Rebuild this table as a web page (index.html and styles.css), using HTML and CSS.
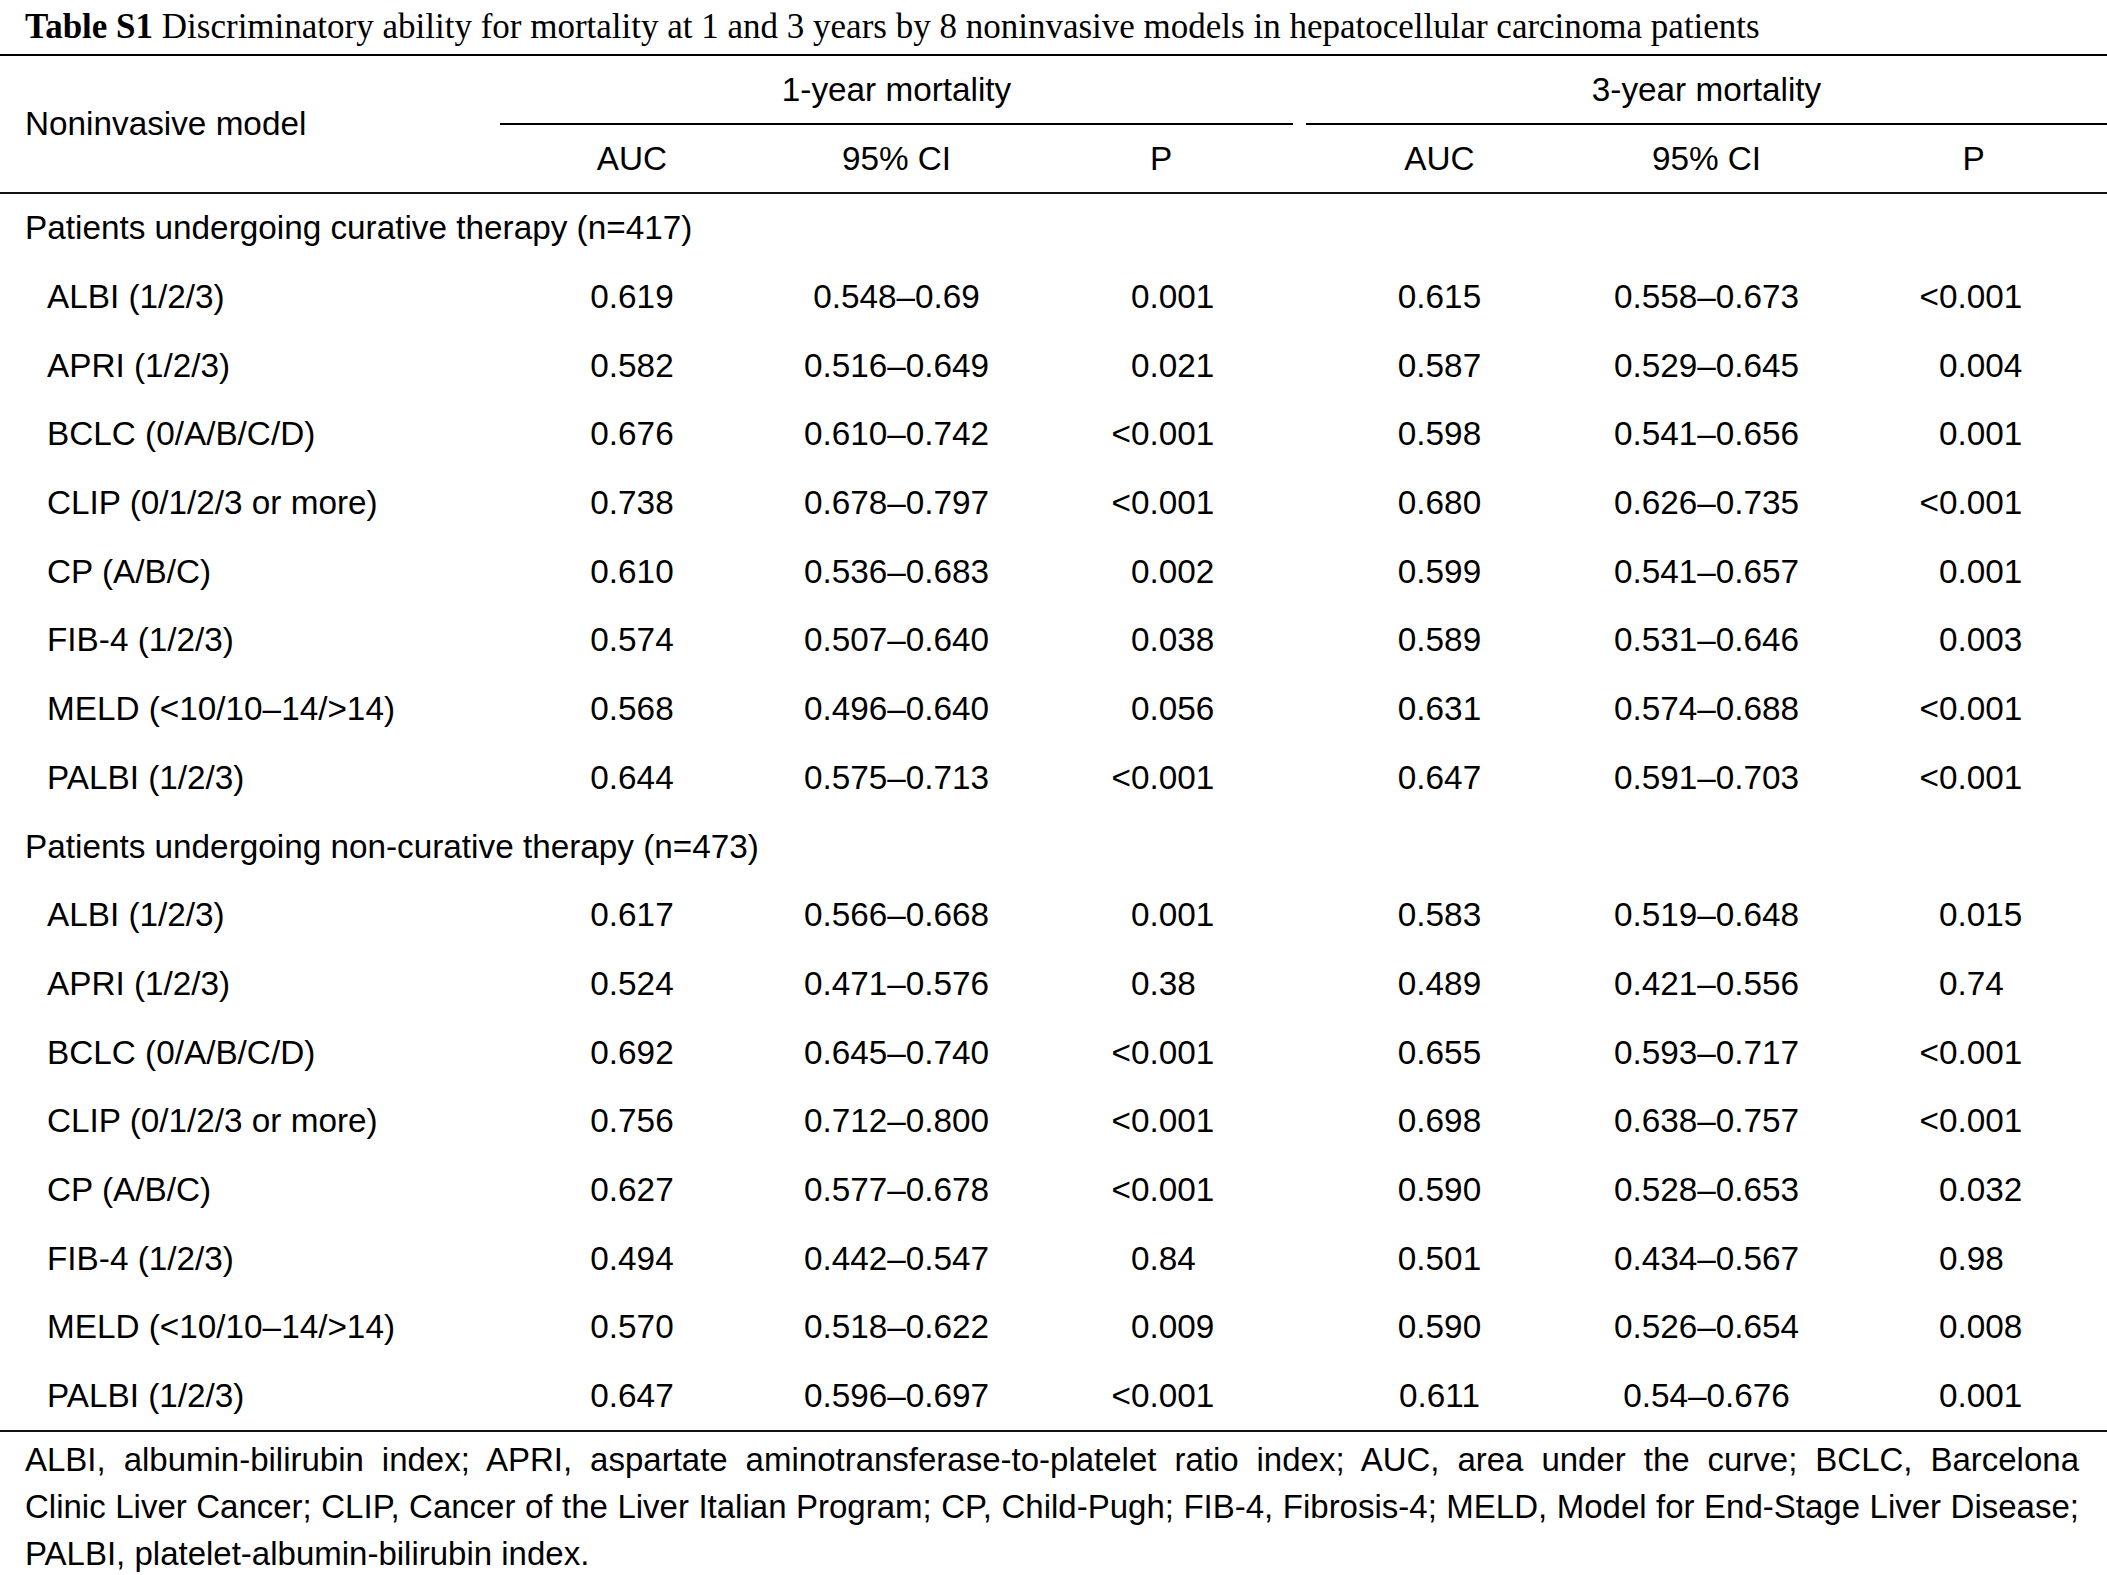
FILE: index.html
```html
<!DOCTYPE html>
<html lang="en">
<head>
<meta charset="utf-8">
<title>Table S1</title>
<link rel="stylesheet" href="styles.css">
</head>
<body>
<div class="page">
  <h1 class="caption"><b>Table S1</b> Discriminatory ability for mortality at 1 and 3 years by 8 noninvasive models in hepatocellular carcinoma patients</h1>

  <div class="grid thead">
    <div class="h-model">Noninvasive model</div>
    <div class="h-span">1-year mortality</div>
    <div class="sp"></div>
    <div class="h-span">3-year mortality</div>
    <div class="h-col">AUC</div>
    <div class="h-col">95% CI</div>
    <div class="h-col">P</div>
    <div class="sp"></div>
    <div class="h-col">AUC</div>
    <div class="h-col">95% CI</div>
    <div class="h-col">P</div>
  </div>

  <div class="grid tbody">
    <div class="group">Patients undergoing curative therapy (n=417)</div>

    <div class="label">ALBI (1/2/3)</div><div class="num">0.619</div><div class="num">0.548–0.69</div><div class="p p1">0.001</div><div class="sp"></div><div class="num">0.615</div><div class="num">0.558–0.673</div><div class="p p3"><span class="lt">&lt;</span>0.001</div>
    <div class="label">APRI (1/2/3)</div><div class="num">0.582</div><div class="num">0.516–0.649</div><div class="p p1">0.021</div><div class="sp"></div><div class="num">0.587</div><div class="num">0.529–0.645</div><div class="p p3">0.004</div>
    <div class="label">BCLC (0/A/B/C/D)</div><div class="num">0.676</div><div class="num">0.610–0.742</div><div class="p p1"><span class="lt">&lt;</span>0.001</div><div class="sp"></div><div class="num">0.598</div><div class="num">0.541–0.656</div><div class="p p3">0.001</div>
    <div class="label">CLIP (0/1/2/3 or more)</div><div class="num">0.738</div><div class="num">0.678–0.797</div><div class="p p1"><span class="lt">&lt;</span>0.001</div><div class="sp"></div><div class="num">0.680</div><div class="num">0.626–0.735</div><div class="p p3"><span class="lt">&lt;</span>0.001</div>
    <div class="label">CP (A/B/C)</div><div class="num">0.610</div><div class="num">0.536–0.683</div><div class="p p1">0.002</div><div class="sp"></div><div class="num">0.599</div><div class="num">0.541–0.657</div><div class="p p3">0.001</div>
    <div class="label">FIB-4 (1/2/3)</div><div class="num">0.574</div><div class="num">0.507–0.640</div><div class="p p1">0.038</div><div class="sp"></div><div class="num">0.589</div><div class="num">0.531–0.646</div><div class="p p3">0.003</div>
    <div class="label">MELD (&lt;10/10–14/&gt;14)</div><div class="num">0.568</div><div class="num">0.496–0.640</div><div class="p p1">0.056</div><div class="sp"></div><div class="num">0.631</div><div class="num">0.574–0.688</div><div class="p p3"><span class="lt">&lt;</span>0.001</div>
    <div class="label">PALBI (1/2/3)</div><div class="num">0.644</div><div class="num">0.575–0.713</div><div class="p p1"><span class="lt">&lt;</span>0.001</div><div class="sp"></div><div class="num">0.647</div><div class="num">0.591–0.703</div><div class="p p3"><span class="lt">&lt;</span>0.001</div>

    <div class="group">Patients undergoing non-curative therapy (n=473)</div>

    <div class="label">ALBI (1/2/3)</div><div class="num">0.617</div><div class="num">0.566–0.668</div><div class="p p1">0.001</div><div class="sp"></div><div class="num">0.583</div><div class="num">0.519–0.648</div><div class="p p3">0.015</div>
    <div class="label">APRI (1/2/3)</div><div class="num">0.524</div><div class="num">0.471–0.576</div><div class="p p1">0.38</div><div class="sp"></div><div class="num">0.489</div><div class="num">0.421–0.556</div><div class="p p3">0.74</div>
    <div class="label">BCLC (0/A/B/C/D)</div><div class="num">0.692</div><div class="num">0.645–0.740</div><div class="p p1"><span class="lt">&lt;</span>0.001</div><div class="sp"></div><div class="num">0.655</div><div class="num">0.593–0.717</div><div class="p p3"><span class="lt">&lt;</span>0.001</div>
    <div class="label">CLIP (0/1/2/3 or more)</div><div class="num">0.756</div><div class="num">0.712–0.800</div><div class="p p1"><span class="lt">&lt;</span>0.001</div><div class="sp"></div><div class="num">0.698</div><div class="num">0.638–0.757</div><div class="p p3"><span class="lt">&lt;</span>0.001</div>
    <div class="label">CP (A/B/C)</div><div class="num">0.627</div><div class="num">0.577–0.678</div><div class="p p1"><span class="lt">&lt;</span>0.001</div><div class="sp"></div><div class="num">0.590</div><div class="num">0.528–0.653</div><div class="p p3">0.032</div>
    <div class="label">FIB-4 (1/2/3)</div><div class="num">0.494</div><div class="num">0.442–0.547</div><div class="p p1">0.84</div><div class="sp"></div><div class="num">0.501</div><div class="num">0.434–0.567</div><div class="p p3">0.98</div>
    <div class="label">MELD (&lt;10/10–14/&gt;14)</div><div class="num">0.570</div><div class="num">0.518–0.622</div><div class="p p1">0.009</div><div class="sp"></div><div class="num">0.590</div><div class="num">0.526–0.654</div><div class="p p3">0.008</div>
    <div class="label">PALBI (1/2/3)</div><div class="num">0.647</div><div class="num">0.596–0.697</div><div class="p p1"><span class="lt">&lt;</span>0.001</div><div class="sp"></div><div class="num">0.611</div><div class="num">0.54–0.676</div><div class="p p3">0.001</div>
  </div>

  <div class="notes">
    <div class="j">ALBI, albumin-bilirubin index; APRI, aspartate aminotransferase-to-platelet ratio index; AUC, area under the curve; BCLC, Barcelona</div>
    <div class="j">Clinic Liver Cancer; CLIP, Cancer of the Liver Italian Program; CP, Child-Pugh; FIB-4, Fibrosis-4; MELD, Model for End-Stage Liver Disease;</div>
    <div>PALBI, platelet-albumin-bilirubin index.</div>
  </div>
</div>
</body>
</html>
```

FILE: styles.css
```css
* {
  box-sizing: border-box;
  margin: 0;
  padding: 0;
}

html,
body {
  background: #fff;
}

body {
  margin: 0;
  font-family: "Liberation Sans", Arial, Helvetica, sans-serif;
  font-size: 33.3px;
  color: #000;
}

.page {
  width: 2107px;
}

.caption {
  font-family: "Liberation Serif", "Times New Roman", serif;
  font-weight: normal;
  font-size: 35px;
  height: 54px;
  line-height: 54px;
  padding-left: 25px;
  white-space: nowrap;
}

.caption b {
  font-weight: bold;
}

.grid {
  display: grid;
  grid-template-columns: 500px 264px 265px 264px 13px 267px 267px 267px;
}

.thead {
  border-top: 2px solid #000;
  border-bottom: 2px solid #111;
  grid-template-rows: 69px 67px;
}

.h-model {
  grid-column: 1;
  grid-row: 1 / span 2;
  display: flex;
  align-items: center;
  padding-left: 25px;
}

.h-span {
  grid-column: span 3;
  border-bottom: 2px solid #000;
  display: flex;
  align-items: center;
  justify-content: center;
}

.h-col,
.num {
  display: flex;
  align-items: center;
  justify-content: center;
  white-space: nowrap;
}

.tbody {
  grid-auto-rows: 68.7px;
  border-bottom: 2px solid #111;
}

.group {
  grid-column: 1 / -1;
  display: flex;
  align-items: center;
  padding-left: 25px;
}

.label {
  display: flex;
  align-items: center;
  padding-left: 47px;
  white-space: nowrap;
}

.p {
  display: flex;
  align-items: center;
  white-space: nowrap;
}

.p1 {
  padding-left: 102px;
}

.p3 {
  padding-left: 99px;
}

.lt {
  margin-left: -0.584em;
}

.notes {
  padding: 4px 28px 0 25px;
  line-height: 47px;
  font-size: 33px;
}

.notes .j {
  text-align: justify;
  text-align-last: justify;
  white-space: nowrap;
}
```
